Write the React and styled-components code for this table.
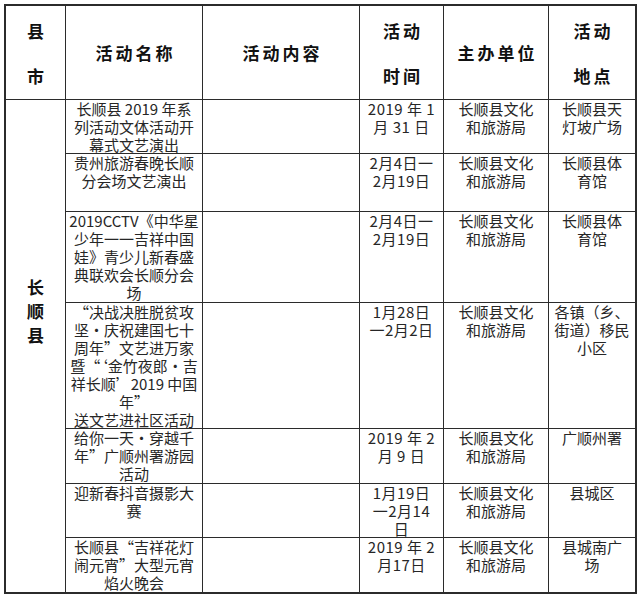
import React from "react";
import styled, { createGlobalStyle } from "styled-components";

const Global = createGlobalStyle`
  html, body { margin: 0; padding: 0; background: #ffffff; }
  body { font-family: "Noto Sans CJK SC", "Noto Sans", sans-serif; }
`;

const Table = styled.div`
  display: grid;
  grid-template-columns: 59px 136px 156px 83px 104px 86px;
  grid-template-rows: 93px 53px 57px 90px 125px 54px 53px 54px;
  gap: 1px;
  width: fit-content;
  margin: 4px 0 0 4px;
  background: #2b2b2b;
  border: 2px solid #2b2b2b;
`;

const HeadCell = styled.div`
  background: #fff;
  display: flex;
  flex-direction: column;
  align-items: center;
  justify-content: center;
  font-family: "Noto Sans CJK SC", sans-serif;
  font-weight: 700;
  font-size: 17px;
  line-height: ${(p) => (p.$stacked ? "45px" : "22px")};
  letter-spacing: ${(p) => p.$spacing || 0}px;
  padding-left: ${(p) => p.$spacing || 0}px;
  color: #111;
`;

const CountyCell = styled.div`
  background: #fff;
  grid-row: span 7;
  display: flex;
  flex-direction: column;
  align-items: center;
  padding-top: 175px;
  font-weight: 700;
  font-size: 17px;
  line-height: 24px;
  color: #111;
`;

const BodyCell = styled.div`
  background: #fff;
  display: flex;
  flex-direction: column;
  align-items: center;
  font-size: 15px;
  line-height: 18px;
  color: #262626;
  letter-spacing: ${(p) => p.$spacing || 0}px;
`;

const Line = styled.span`
  white-space: nowrap;
  display: block;
`;

const rows = [
  {
    name: ["长顺县 2019 年系", "列活动文体活动开", "幕式文艺演出"],
    time: ["2019 年 1", "月 31 日"],
    place: ["长顺县天", "灯坡广场"],
  },
  {
    name: ["贵州旅游春晚长顺", "分会场文艺演出"],
    time: ["2月4日一", "2月19日"],
    place: ["长顺县体", "育馆"],
  },
  {
    name: ["2019CCTV《中华星", "少年一一吉祥中国", "娃》青少儿新春盛", "典联欢会长顺分会", "场"],
    time: ["2月4日一", "2月19日"],
    place: ["长顺县体", "育馆"],
  },
  {
    name: [
      "“决战决胜脱贫攻",
      "坚·庆祝建国七十",
      "周年”文艺进万家",
      "暨“‘金竹夜郎·吉",
      "祥长顺’2019 中国",
      "年”",
      "送文艺进社区活动",
    ],
    time: ["1月28日", "一2月2日"],
    place: ["各镇（乡、", "街道）移民", "小区"],
  },
  {
    name: ["给你一天·穿越千", "年”广顺州署游园", "活动"],
    time: ["2019 年 2", "月 9 日"],
    place: ["广顺州署"],
  },
  {
    name: ["迎新春抖音摄影大", "赛"],
    time: ["1月19日", "一2月14", "日"],
    place: ["县城区"],
  },
  {
    name: ["长顺县“吉祥花灯", "闹元宵”大型元宵", "焰火晚会"],
    time: ["2019 年 2", "月17日"],
    place: ["县城南广", "场"],
  },
];

const Lines = ({ items }) => items.map((t, i) => <Line key={i}>{t}</Line>);

export default function App() {
  return (
    <>
      <Global />
      <Table>
        <HeadCell $stacked>
          <Line>县</Line>
          <Line>市</Line>
        </HeadCell>
        <HeadCell $spacing={3}>活动名称</HeadCell>
        <HeadCell $spacing={3}>活动内容</HeadCell>
        <HeadCell $stacked $spacing={3}>
          <Line>活动</Line>
          <Line>时间</Line>
        </HeadCell>
        <HeadCell $spacing={3}>主办单位</HeadCell>
        <HeadCell $stacked $spacing={3}>
          <Line>活动</Line>
          <Line>地点</Line>
        </HeadCell>

        <CountyCell>
          <Line>长</Line>
          <Line>顺</Line>
          <Line>县</Line>
        </CountyCell>

        {rows.map((r, i) => (
          <React.Fragment key={i}>
            <BodyCell style={{ gridColumn: 2 }}>
              <Lines items={r.name} />
            </BodyCell>
            <BodyCell />
            <BodyCell $spacing={0.5}>
              <Lines items={r.time} />
            </BodyCell>
            <BodyCell>
              <Lines items={["长顺县文化", "和旅游局"]} />
            </BodyCell>
            <BodyCell>
              <Lines items={r.place} />
            </BodyCell>
          </React.Fragment>
        ))}
      </Table>
    </>
  );
}
